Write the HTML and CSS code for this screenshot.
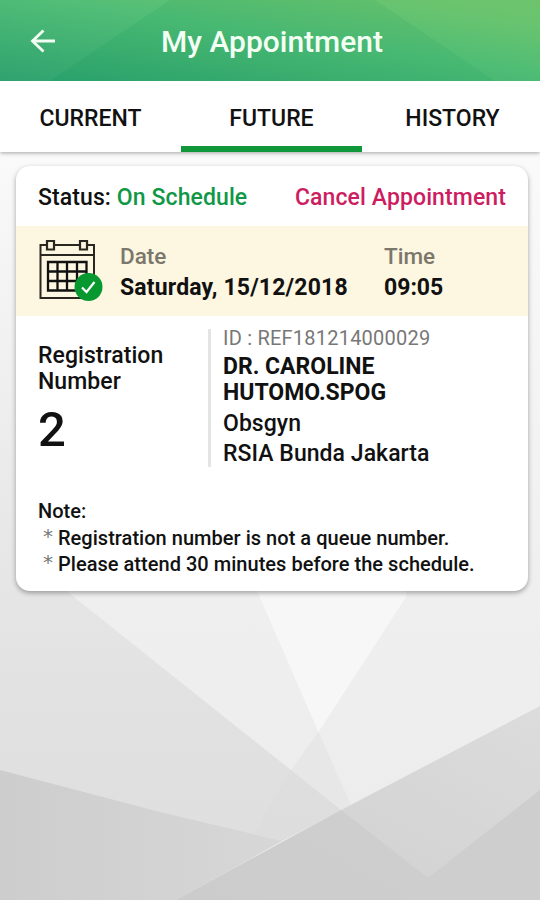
FILE: index.html
```
<!DOCTYPE html>
<html lang="en">
<head>
<meta charset="utf-8">
<title>My Appointment</title>
<link rel="stylesheet" href="styles.css">
</head>
<body>
<svg class="backdrop" viewBox="0 0 540 900" preserveAspectRatio="none" aria-hidden="true">
  <defs>
    <linearGradient id="base" x1="0" y1="0" x2="0" y2="1"><stop offset=".17" stop-color="#fafafa"/><stop offset=".65" stop-color="#efefef"/><stop offset="1" stop-color="#ececec"/></linearGradient>
    <linearGradient id="left" x1="0" y1="0" x2="0" y2="1"><stop offset="0" stop-color="#fafafa"/><stop offset=".5" stop-color="#e8e8e8"/><stop offset=".75" stop-color="#e1e1e1"/><stop offset="1" stop-color="#dedede"/></linearGradient>
    <linearGradient id="low" x1="0" y1="0" x2="1" y2="0"><stop offset="0" stop-color="#cdcdcd"/><stop offset="1" stop-color="#d7d7d7"/></linearGradient>
    <linearGradient id="right" x1="0" y1="1" x2="1" y2="0"><stop offset="0" stop-color="#cecece"/><stop offset="1" stop-color="#dcdcdc"/></linearGradient>
  </defs>
  <path fill="url(#base)" d="M0 0h540v900H0z"/>
  <path fill="#f7f7f7" d="M258 593L318.500 732L406 597V580H252z"/>
  <path fill="#e7e7e7" d="M318.500 732L351 805L341 810L291 770z"/>
  <path fill="url(#left)" d="M0 152L16 166V551L69 593L341 810L282 841L176 900H0z"/>
  <path fill="#dbdbdb" d="M291 770L341 810L282 841L254 833z" opacity=".5"/>
  <path fill="url(#low)" d="M0 770L160 812L282 841L176 900H0z"/>
  <path fill="url(#right)" d="M540 706L341 810L176 900H540z"/>
  <path fill="#cbcbcb" opacity=".65" d="M341 810L428 878L404 900H176z"/>
  <path fill="#cecece" d="M540 790L428 878L404 900H540z"/>
</svg>
<div class="app">
  <header class="bar">
    <svg class="facets" viewBox="0 0 540 81" preserveAspectRatio="none" aria-hidden="true">
      <path fill="#fff" opacity=".02" d="M170 0L50 81H0V0z"/>
      <path fill="#07905c" opacity=".09" d="M170 0L50 81H495L375 0z"/>
    </svg>
    <svg class="back" viewBox="0 0 26 24" aria-label="Back"><path d="M13.500 1.500L2.500 12L13.500 22.500M2.500 12H25" fill="none" stroke="#f3fff3" stroke-width="2.800"/></svg>
    <h1 class="title"><span>My Appointment</span></h1>
  </header>
  <nav class="tabs">
    <a class="tab"><span>CURRENT</span></a>
    <a class="tab active"><span>FUTURE</span></a>
    <a class="tab"><span>HISTORY</span></a>
  </nav>
  <main class="card">
    <div class="status">
      <div class="state">Status: <span class="ok">On Schedule</span></div>
      <a class="cancel">Cancel Appointment</a>
    </div>
    <section class="when">
      <svg class="calendar" viewBox="0 0 66 64" aria-hidden="true">
        <g fill="none" stroke="#29271f" stroke-width="2">
          <path d="M8 6H2.500V59H56V6H50M16 6H41M2 16H56"/>
          <path d="M9 2h7v8.500H9zM42 2h7v8.500h-7z" stroke-width="2.200"/>
          <path d="M10 23H48.500V51.500H10zM19.500 23V51.500M29 23V51.500M39 23V51.500M10 32.500H48.500M10 42H48.500" stroke="#111" stroke-width="2.300"/>
        </g>
        <circle cx="50.500" cy="48" r="14" fill="#07992f"/>
        <path d="M44 48.500L48.500 53L56.500 43" fill="none" stroke="#fff" stroke-width="2.200"/>
      </svg>
      <div class="slot date"><span class="label">Date</span><b>Saturday, 15/12/2018</b></div>
      <div class="slot time"><span class="label">Time</span><b>09:05</b></div>
    </section>
    <section class="details">
      <div class="reg">
        <div class="reg-label">Registration<br>Number</div>
        <div class="reg-num">2</div>
      </div>
      <div class="doctor">
        <div class="ref">ID : REF181214000029</div>
        <div class="name">DR. CAROLINE<br>HUTOMO.SPOG</div>
        <div class="place">Obsgyn</div>
        <div class="place hospital">RSIA Bunda Jakarta</div>
      </div>
    </section>
    <section class="note">
      <div class="note-title">Note:</div>
      <ul>
        <li><i>*</i><span>Registration number is not a queue number.</span></li>
        <li><i>*</i><span>Please attend 30 minutes before the schedule.</span></li>
      </ul>
    </section>
  </main>
</div>
</body>
</html>
```
FILE: styles.css
```
* { box-sizing: border-box; }
body { margin: 0; width: 540px; height: 900px; overflow: hidden; font-family: Roboto, "Liberation Sans", sans-serif; font-weight: 500; color: #111; }
.backdrop { position: absolute; inset: 0; width: 540px; height: 900px; z-index: -1; }
.bar { position: relative; height: 81px; display: flex; align-items: center; background: linear-gradient(to top right, #2ba16d 0%, #4fbd75 55%, #69c46f 85%, #6dc36c 100%); }
.facets { position: absolute; inset: 0; width: 100%; height: 100%; }
.back { position: relative; width: 26px; height: 24px; margin-left: 30px; }
.title { position: relative; margin: 3px 0 0 105px; font-size: 30px; font-weight: 500; line-height: 36px; color: #f3fff3; white-space: nowrap; }
.tabs { display: grid; grid-template-columns: 181px 181px 178px; height: 71px; background: #fff; box-shadow: 0 1px 4px rgba(0,0,0,.35); }
.tab { display: flex; justify-content: center; padding-top: 23px; font-size: 23px; line-height: 30px; }
.tab:last-child { padding-left: 3px; }
.active { border-bottom: 6px solid #109739; }
.card { margin: 14px 12px 0 16px; height: 425px; border-radius: 14px; background: #fff; box-shadow: 0 2px 5px rgba(0,0,0,.34); }
.status { height: 60px; padding: 2px 22px 0; display: flex; align-items: center; justify-content: space-between; font-size: 23px; letter-spacing: .1px; white-space: nowrap; }
.ok { color: #109747; }
.cancel { color: #cc1d60; }
.when { height: 90px; display: flex; background: #fdf6e1; padding: 13px 0 0 22px; }
.calendar { width: 66px; height: 64px; margin-right: 16px; }
.slot { display: flex; flex-direction: column; font-size: 23px; line-height: 30px; margin-top: 2px; white-space: nowrap; }
.date { width: 264px; }
.label { color: #7b776b; font-size: 22.500px; }
.slot b { margin-top: 2px; font-weight: 700; letter-spacing: .17px; }
.time b { letter-spacing: 0; }
.details { display: flex; padding: 13px 0 0 22px; height: 171px; }
.reg { width: 170px; padding-top: 14px; }
.reg-label { font-size: 23px; line-height: 26px; letter-spacing: .05px; }
.reg-num { font-size: 49px; line-height: 58px; margin-top: 6px; }
.doctor { height: 138px; border-left: 3px solid #e4e4e4; padding-left: 12px; white-space: nowrap; }
.ref { font-size: 20px; line-height: 18px; font-weight: 400; letter-spacing: .22px; color: #777; }
.name { font-size: 23px; line-height: 26px; font-weight: 700; margin-top: 7px; }
.place { font-size: 23px; line-height: 30px; margin-top: 3px; letter-spacing: .05px; }
.hospital { margin-top: 0; }
.note { padding: 11px 22px 0; font-size: 20px; line-height: 26.500px; letter-spacing: .03px; white-space: nowrap; }
.note ul { list-style: none; margin: 0; padding: 0 0 0 5px; }
.note li { display: flex; }
.note i { width: 15px; margin-top: -1px; font-family: "DejaVu Sans", sans-serif; font-style: normal; color: #777; font-size: 20px; line-height: 25px; font-weight: 400; }
```
